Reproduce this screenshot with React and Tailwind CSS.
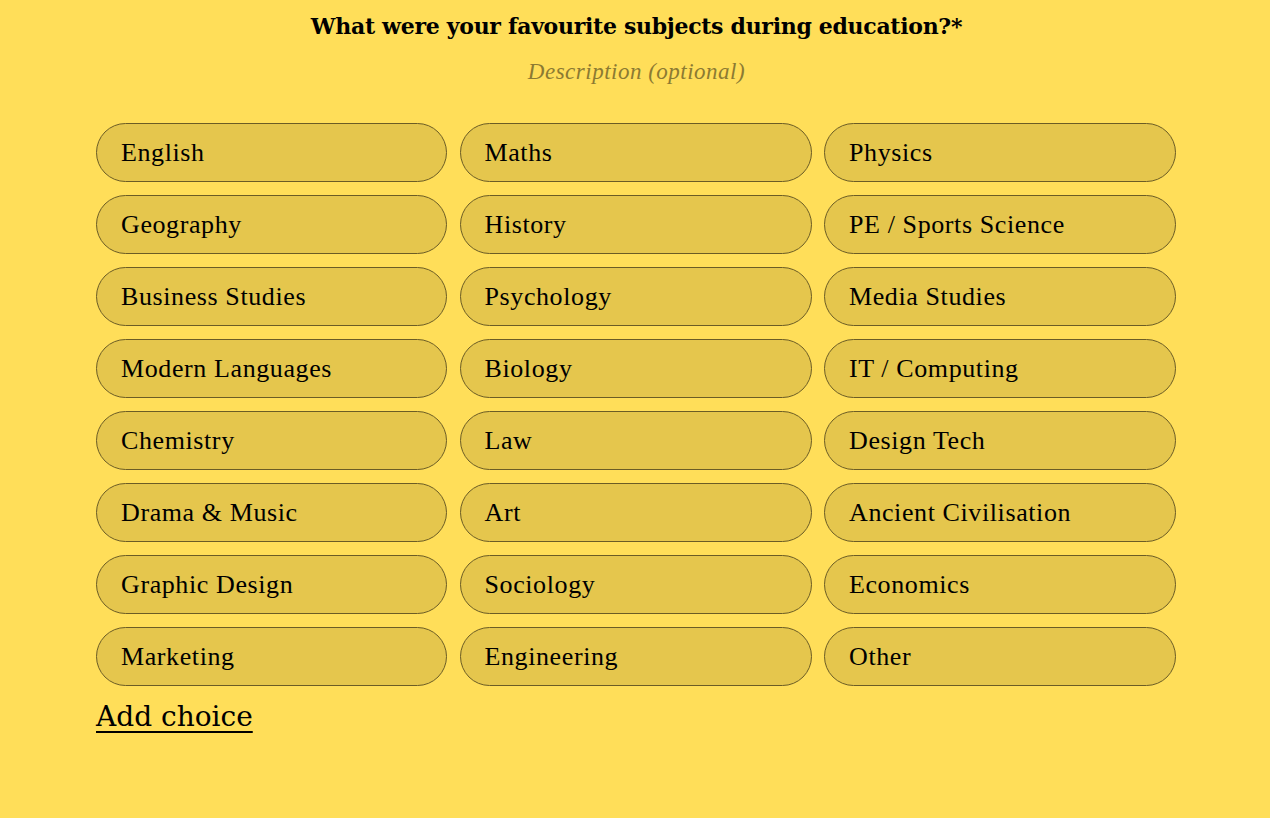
const subjects = [
  "English", "Maths", "Physics",
  "Geography", "History", "PE / Sports Science",
  "Business Studies", "Psychology", "Media Studies",
  "Modern Languages", "Biology", "IT / Computing",
  "Chemistry", "Law", "Design Tech",
  "Drama & Music", "Art", "Ancient Civilisation",
  "Graphic Design", "Sociology", "Economics",
  "Marketing", "Engineering", "Other",
];

export default function App() {
  return (
    <div className="min-h-[818px] w-full bg-[#ffde59] pl-[96px] font-['Liberation_Serif',serif] text-black">
      <div className="w-[1081px] pt-[10px]">
        <h1 className="text-center font-['DejaVu_Serif',serif] text-[22px] font-bold leading-[32px] tracking-[-0.3px]">
          What were your favourite subjects during education?*
        </h1>
        <p className="mt-[18px] text-center text-[23px] italic leading-[24px] tracking-[0.5px] text-[#8c7a32]">
          Description (optional)
        </p>
        <div className="mt-[39px] grid grid-cols-[351px_352px_352px] gap-x-[12.5px] gap-y-[13px]">
          {subjects.map((s) => (
            <button
              key={s}
              className="flex h-[59px] items-center rounded-full border border-[#6b5c25] bg-[#e5c64d] pl-[24px] text-left text-[26px] leading-none tracking-[0.6px]"
            >
              {s}
            </button>
          ))}
        </div>
        <button className="mt-[13px] font-['DejaVu_Serif',serif] text-[28px] leading-[36px] underline underline-offset-[5px]">
          Add choice
        </button>
      </div>
    </div>
  );
}
